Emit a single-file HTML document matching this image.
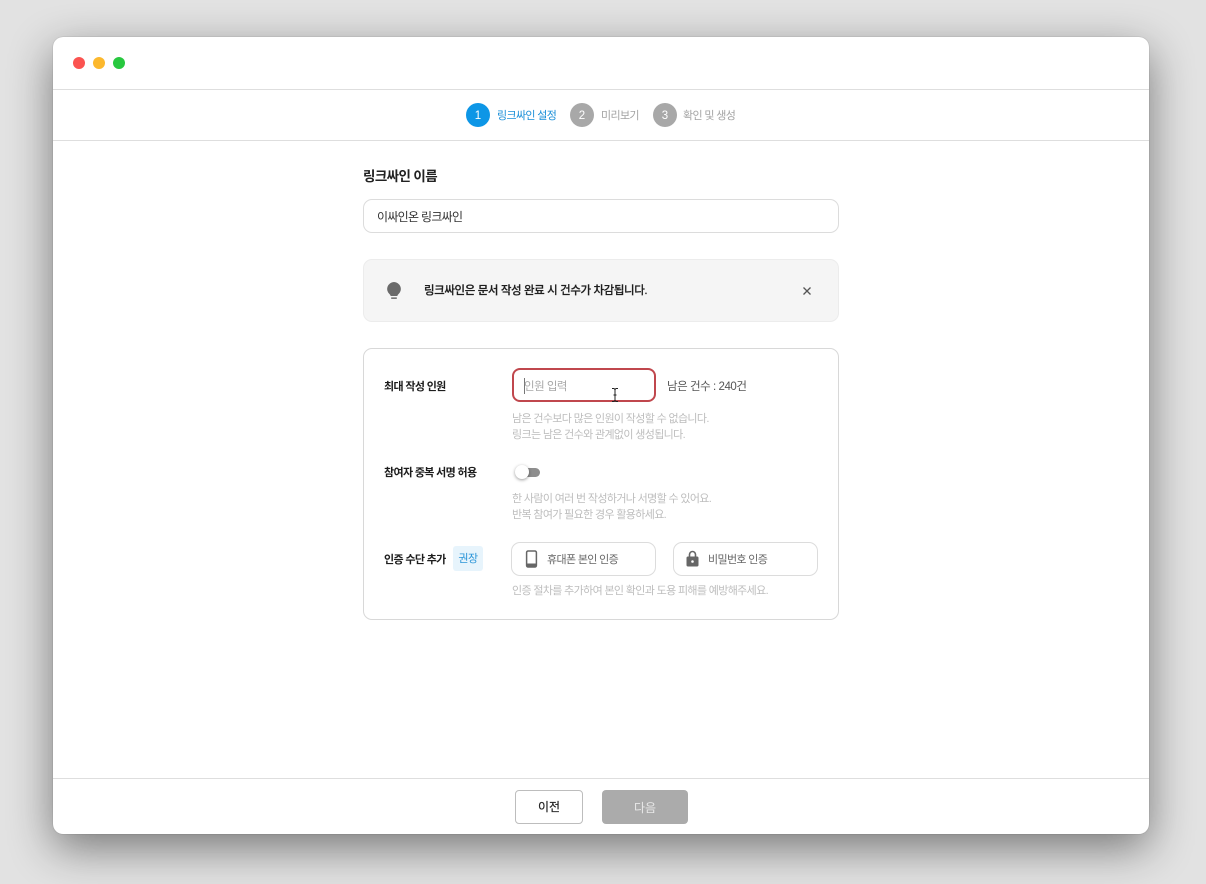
<!DOCTYPE html>
<html lang="ko"><head><meta charset="utf-8"><style>
*{box-sizing:border-box}
html,body{margin:0;padding:0;width:1206px;height:884px;overflow:hidden;background:#e2e2e2;font-family:"Liberation Sans","Noto Sans CJK KR",sans-serif;}
.a{position:absolute;white-space:nowrap}
#win{position:absolute;left:53px;top:37px;width:1096px;height:797px;background:#fff;border-radius:10px;box-shadow:0 0 1px rgba(0,0,0,.35),0 14px 44px rgba(0,0,0,.47);}
.line{position:absolute;left:53px;width:1096px;height:1px;background:#dedede}
.dot{position:absolute;top:57px;width:12px;height:12px;border-radius:50%}
.num{position:absolute;top:103px;width:24px;height:24px;border-radius:50%;background:#a8a8a8;color:#fff;font-size:11.500px;line-height:26px;text-align:center}
.st{font-size:11px;letter-spacing:-.65px;line-height:16px;top:107.500px;color:#a3a3a3}
.box{position:absolute;background:#fff;border:1px solid #dcdcdc;border-radius:9px}
.lb{font-size:11px;font-weight:700;letter-spacing:-.65px;color:#1d1d1d;line-height:16px}
.hint{font-size:11px;letter-spacing:-.65px;color:#bdbdbd;line-height:16px}
.tx{font-size:11px;letter-spacing:-.65px;line-height:16px;color:#666}
</style></head><body>
<div id="win"></div>
<div class="dot" style="left:73px;background:#fb5350"></div>
<div class="dot" style="left:93px;background:#fcb82d"></div>
<div class="dot" style="left:113px;background:#28c83f"></div>
<div class="line" style="top:89px"></div>
<div class="line" style="top:140px"></div>
<div class="line" style="top:778px"></div>

<div class="num" style="left:466px;background:#0d96e6">1</div>
<div class="a st" style="left:497px;color:#1a8fd8">링크싸인 설정</div>
<div class="num" style="left:570px">2</div>
<div class="a st" style="left:601px">미리보기</div>
<div class="num" style="left:653px">3</div>
<div class="a st" style="left:683px">확인 및 생성</div>

<div class="a" style="left:363px;top:168px;font-size:13.500px;font-weight:700;letter-spacing:-.6px;line-height:18px;color:#222">링크싸인 이름</div>
<div class="box" style="left:363px;top:199px;width:476px;height:34px"></div>
<div class="a" style="left:377px;top:209px;font-size:12px;letter-spacing:-.7px;line-height:17px;color:#333">이싸인온 링크싸인</div>

<div class="box" style="left:363px;top:259px;width:476px;height:63px;background:#f5f5f5;border-color:#ececec"></div>
<svg class="a" style="left:386px;top:281px" width="16" height="19" viewBox="0 0 16 19"><path d="M8 1a7 7 0 0 0-4.400 12.300c.6.5.9 1 .9 1.200v.5h7v-.5c0-.2.3-.7.9-1.200A7 7 0 0 0 8 1z" fill="#6a6a6a"/><rect x="5.200" y="16.400" width="5.600" height="1.500" fill="#6a6a6a"/></svg>
<div class="a" style="left:424px;top:283px;font-size:11.500px;font-weight:500;letter-spacing:-.4px;line-height:17px;color:#1f1f1f;-webkit-text-stroke:.2px #1f1f1f">링크싸인은 문서 작성 완료 시 건수가 차감됩니다.</div>
<svg class="a" style="left:802px;top:285.500px" width="10" height="10" viewBox="0 0 10 10"><path d="M1.500 1.500l7 7M8.500 1.500l-7 7" stroke="#555" stroke-width="1.300" fill="none"/></svg>

<div class="box" style="left:363px;top:348px;width:476px;height:272px;border-color:#d8d8d8"></div>
<div class="a lb" style="left:384px;top:378.500px">최대 작성 인원</div>
<div class="a" style="left:512px;top:368px;width:144px;height:34px;background:#fff;border:2px solid #c0474d;border-radius:8px"></div>
<div class="a" style="left:523.500px;top:378px;width:1.500px;height:16px;background:#777"></div>
<div class="a" style="left:524px;top:379px;font-size:11.500px;letter-spacing:-.5px;line-height:16px;color:#a8a8a8">인원 입력</div>
<svg class="a" style="left:610px;top:387px" width="10" height="16" viewBox="0 0 10 16"><path d="M2 1.500h2l1 1 1-1h2M5 2.500v11M2 14.500h2l1-1 1 1h2M3.500 8h3" stroke="#222" stroke-width="1" fill="none"/></svg>
<div class="a" style="left:667px;top:379px;font-size:11.500px;letter-spacing:-.45px;line-height:17px;color:#555">남은 건수 : 240건</div>
<div class="a hint" style="left:512px;top:410.500px">남은 건수보다 많은 인원이 작성할 수 없습니다.</div>
<div class="a hint" style="left:512px;top:426.500px">링크는 남은 건수와 관계없이 생성됩니다.</div>

<div class="a lb" style="left:384px;top:465px">참여자 중복 서명 허용</div>
<div class="a" style="left:518px;top:468px;width:22px;height:9px;border-radius:5px;background:#8e8e8e"></div>
<div class="a" style="left:515px;top:465px;width:14px;height:14px;border-radius:50%;background:#fff;box-shadow:0 1px 3px rgba(0,0,0,.4)"></div>
<div class="a hint" style="left:512px;top:490.500px">한 사람이 여러 번 작성하거나 서명할 수 있어요.</div>
<div class="a hint" style="left:512px;top:506.500px">반복 참여가 필요한 경우 활용하세요.</div>

<div class="a lb" style="left:384px;top:551.500px">인증 수단 추가</div>
<div class="a" style="left:453px;top:546px;width:30px;height:25px;background:#e7f4fc;border-radius:3px;color:#2a95d8;font-size:11px;letter-spacing:-.5px;line-height:27px;text-align:center">권장</div>
<div class="box" style="left:511px;top:542px;width:145px;height:34px"></div>
<svg class="a" style="left:525px;top:550px" width="13" height="18" viewBox="0 0 13 18"><rect x="1.600" y="1" width="9.800" height="16" rx="1.500" fill="none" stroke="#666" stroke-width="1.500"/><rect x="2" y="13.500" width="9" height="3" fill="#666"/></svg>
<div class="a tx" style="left:547px;top:551.500px">휴대폰 본인 인증</div>
<div class="box" style="left:673px;top:542px;width:145px;height:34px"></div>
<svg class="a" style="left:685px;top:550px" width="15" height="17" viewBox="0 0 15 17"><path d="M4.500 7V4.500a3 3 0 0 1 6 0V7" fill="none" stroke="#666" stroke-width="1.600"/><rect x="1.500" y="6.500" width="12" height="10" rx="1.500" fill="#666"/><circle cx="7.500" cy="11.500" r="1.300" fill="#fff"/></svg>
<div class="a tx" style="left:708px;top:551.500px">비밀번호 인증</div>
<div class="a hint" style="left:512px;top:583px">인증 절차를 추가하여 본인 확인과 도용 피해를 예방해주세요.</div>

<div class="a" style="left:515px;top:790px;width:68px;height:34px;background:#fff;border:1px solid #bdbdbd;border-radius:4px;font-size:12px;line-height:33px;text-align:center;color:#222;-webkit-text-stroke:.2px #222">이전</div>
<div class="a" style="left:602px;top:790px;width:86px;height:34px;background:#ababab;border-radius:4px;font-size:12px;line-height:36px;text-align:center;color:#e8e8e8">다음</div>
</body></html>
